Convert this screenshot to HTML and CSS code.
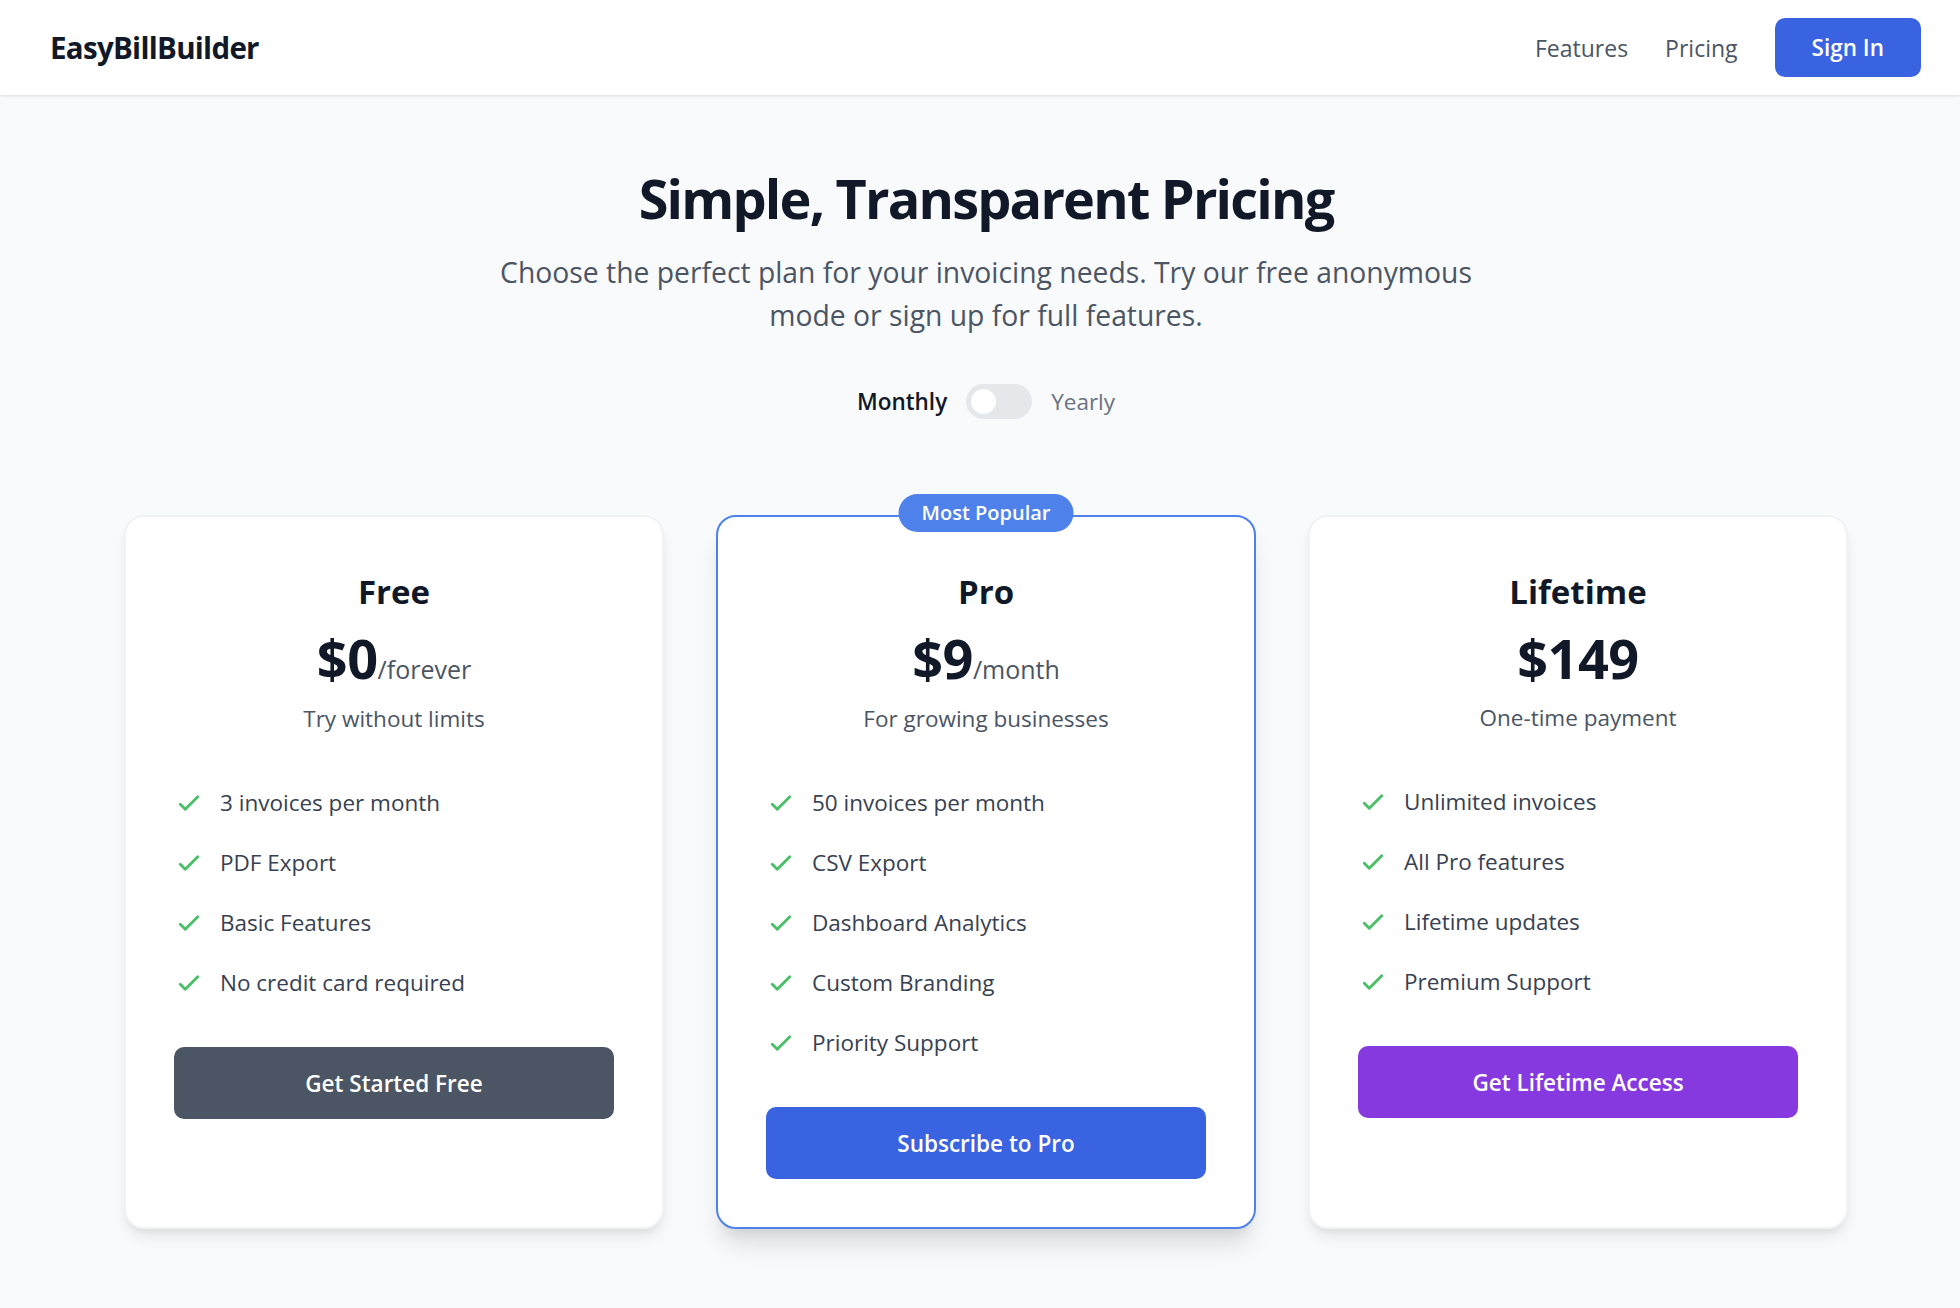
FILE: index.html
```html
<!DOCTYPE html>
<html lang="en">
<head>
<meta charset="utf-8">
<title>EasyBillBuilder – Pricing</title>
<link rel="stylesheet" href="styles.css">
</head>
<body>
<header class="topbar">
  <div class="logo">EasyBillBuilder</div>
  <nav class="nav">
    <a class="nav-link" href="#">Features</a>
    <a class="nav-link" href="#">Pricing</a>
    <a class="btn-signin" href="#">Sign In</a>
  </nav>
</header>

<main class="pricing">
  <h1 class="title">Simple, Transparent Pricing</h1>
  <p class="lead">Choose the perfect plan for your invoicing needs. Try our free anonymous mode or sign up for full features.</p>

  <div class="billing">
    <span class="billing-on">Monthly</span>
    <span class="switch"><span class="knob"></span></span>
    <span class="billing-off">Yearly</span>
  </div>

  <div class="plans">
    <section class="card">
      <h2 class="plan-name">Free</h2>
      <div class="price"><span class="amount">$0</span><span class="per">/forever</span></div>
      <p class="tagline">Try without limits</p>
      <ul class="features">
        <li><svg class="check" viewBox="0 0 24 24"><path d="M5 13l4 4L19 7"/></svg>3 invoices per month</li>
        <li><svg class="check" viewBox="0 0 24 24"><path d="M5 13l4 4L19 7"/></svg>PDF Export</li>
        <li><svg class="check" viewBox="0 0 24 24"><path d="M5 13l4 4L19 7"/></svg>Basic Features</li>
        <li><svg class="check" viewBox="0 0 24 24"><path d="M5 13l4 4L19 7"/></svg>No credit card required</li>
      </ul>
      <a class="cta cta-gray" href="#">Get Started Free</a>
    </section>

    <section class="card card-featured">
      <span class="badge">Most Popular</span>
      <h2 class="plan-name">Pro</h2>
      <div class="price"><span class="amount">$9</span><span class="per">/month</span></div>
      <p class="tagline">For growing businesses</p>
      <ul class="features">
        <li><svg class="check" viewBox="0 0 24 24"><path d="M5 13l4 4L19 7"/></svg>50 invoices per month</li>
        <li><svg class="check" viewBox="0 0 24 24"><path d="M5 13l4 4L19 7"/></svg>CSV Export</li>
        <li><svg class="check" viewBox="0 0 24 24"><path d="M5 13l4 4L19 7"/></svg>Dashboard Analytics</li>
        <li><svg class="check" viewBox="0 0 24 24"><path d="M5 13l4 4L19 7"/></svg>Custom Branding</li>
        <li><svg class="check" viewBox="0 0 24 24"><path d="M5 13l4 4L19 7"/></svg>Priority Support</li>
      </ul>
      <a class="cta cta-blue" href="#">Subscribe to Pro</a>
    </section>

    <section class="card">
      <h2 class="plan-name">Lifetime</h2>
      <div class="price"><span class="amount">$149</span></div>
      <p class="tagline">One-time payment</p>
      <ul class="features">
        <li><svg class="check" viewBox="0 0 24 24"><path d="M5 13l4 4L19 7"/></svg>Unlimited invoices</li>
        <li><svg class="check" viewBox="0 0 24 24"><path d="M5 13l4 4L19 7"/></svg>All Pro features</li>
        <li><svg class="check" viewBox="0 0 24 24"><path d="M5 13l4 4L19 7"/></svg>Lifetime updates</li>
        <li><svg class="check" viewBox="0 0 24 24"><path d="M5 13l4 4L19 7"/></svg>Premium Support</li>
      </ul>
      <a class="cta cta-purple" href="#">Get Lifetime Access</a>
    </section>
  </div>
</main>
</body>
</html>
```

FILE: styles.css
```css
* { box-sizing: border-box; }

html, body {
  margin: 0;
  padding: 0;
}

body {
  background: #f9fafb;
  font-family: "Open Sans", "Noto Sans", "Liberation Sans", sans-serif;
  color: #111827;
  min-height: 1308px;
}

a { text-decoration: none; }

/* Header */
.topbar {
  height: 95px;
  background: #ffffff;
  display: flex;
  align-items: center;
  justify-content: space-between;
  padding: 0 39px 0 50px;
  box-shadow: 0 1px 3px rgba(0, 0, 0, 0.08), 0 1px 2px rgba(0, 0, 0, 0.05);
  position: relative;
  z-index: 1;
}

.logo {
  font-size: 29.5px;
  font-weight: 700;
  color: #111827;
  letter-spacing: -0.7px;
}

.nav {
  display: flex;
  align-items: center;
  gap: 37px;
}

.nav-link {
  font-size: 23px;
  font-weight: 500;
  color: #4b5563;
}

.btn-signin {
  display: flex;
  align-items: center;
  height: 59px;
  padding: 0 37px;
  background: #3a63e2;
  color: #ffffff;
  border-radius: 10px;
  font-size: 22.5px;
  font-weight: 600;
}

/* Hero */
.pricing {
  padding: 73px 0 80px 12px;
  display: flex;
  flex-direction: column;
  align-items: center;
}

.title {
  margin: 0;
  font-size: 54px;
  line-height: 60px;
  font-weight: 700;
  letter-spacing: -1.8px;
  color: #111827;
}

.lead {
  margin: 23px 0 0;
  max-width: 1000px;
  text-align: center;
  font-size: 28.3px;
  line-height: 42.5px;
  color: #4b5563;
}

.billing {
  margin-top: 48px;
  display: flex;
  align-items: center;
  gap: 19px;
  font-size: 22.5px;
}

.billing-on {
  font-weight: 600;
  color: #111827;
}

.billing-off {
  color: #6b7280;
}

.switch {
  width: 66px;
  height: 35px;
  border-radius: 999px;
  background: #e5e7eb;
  display: flex;
  align-items: center;
  padding-left: 5px;
}

.knob {
  width: 25px;
  height: 25px;
  border-radius: 50%;
  background: #ffffff;
}

/* Plans */
.plans {
  margin-top: 96px;
  width: 1724px;
  display: grid;
  grid-template-columns: repeat(3, 1fr);
  gap: 52px;
}

.card {
  position: relative;
  background: #ffffff;
  border: 2px solid #f1f2f4;
  border-radius: 20px;
  padding: 55px 48px 48px;
  display: flex;
  flex-direction: column;
  align-items: stretch;
  box-shadow: 0 10px 15px -3px rgba(0, 0, 0, 0.09), 0 4px 6px -2px rgba(0, 0, 0, 0.05);
}

.card-featured {
  border-color: #4f81ea;
  box-shadow: 0 20px 25px -5px rgba(0, 0, 0, 0.12), 0 10px 10px -5px rgba(0, 0, 0, 0.05);
}

.badge {
  position: absolute;
  top: -23px;
  left: 50%;
  transform: translateX(-50%);
  height: 38px;
  line-height: 38px;
  padding: 0 23px;
  background: #4f81ea;
  color: #ffffff;
  border-radius: 999px;
  font-size: 20px;
  font-weight: 600;
  white-space: nowrap;
}

.plan-name {
  margin: 0;
  text-align: center;
  font-size: 33px;
  line-height: 40px;
  font-weight: 700;
  color: #111827;
}

.price {
  margin-top: 16px;
  display: flex;
  justify-content: center;
  align-items: baseline;
}

.amount {
  font-size: 54px;
  line-height: 60px;
  font-weight: 700;
  letter-spacing: -0.5px;
  color: #111827;
}

.per {
  font-size: 25px;
  line-height: 40px;
  color: #4b5563;
}

.tagline {
  margin: 12px 0 0;
  text-align: center;
  font-size: 22.5px;
  line-height: 35px;
  color: #4b5563;
}

.features {
  list-style: none;
  margin: 49px 0 0;
  padding: 0;
  display: flex;
  flex-direction: column;
  gap: 25px;
}

.features li {
  display: flex;
  align-items: center;
  font-size: 22.5px;
  line-height: 35px;
  color: #374151;
}

.check {
  width: 30px;
  height: 30px;
  margin-right: 16px;
  flex: none;
  fill: none;
  stroke: #4cbf69;
  stroke-width: 2.3;
  stroke-linecap: round;
  stroke-linejoin: round;
}

.cta {
  margin-top: 47px;
  height: 72px;
  border-radius: 10px;
  display: flex;
  align-items: center;
  justify-content: center;
  color: #ffffff;
  font-size: 22.5px;
  font-weight: 600;
}

.cta-gray { background: #4b5563; }
.cta-blue { background: #3a63e2; }
.cta-purple { background: #8739e0; }
```
